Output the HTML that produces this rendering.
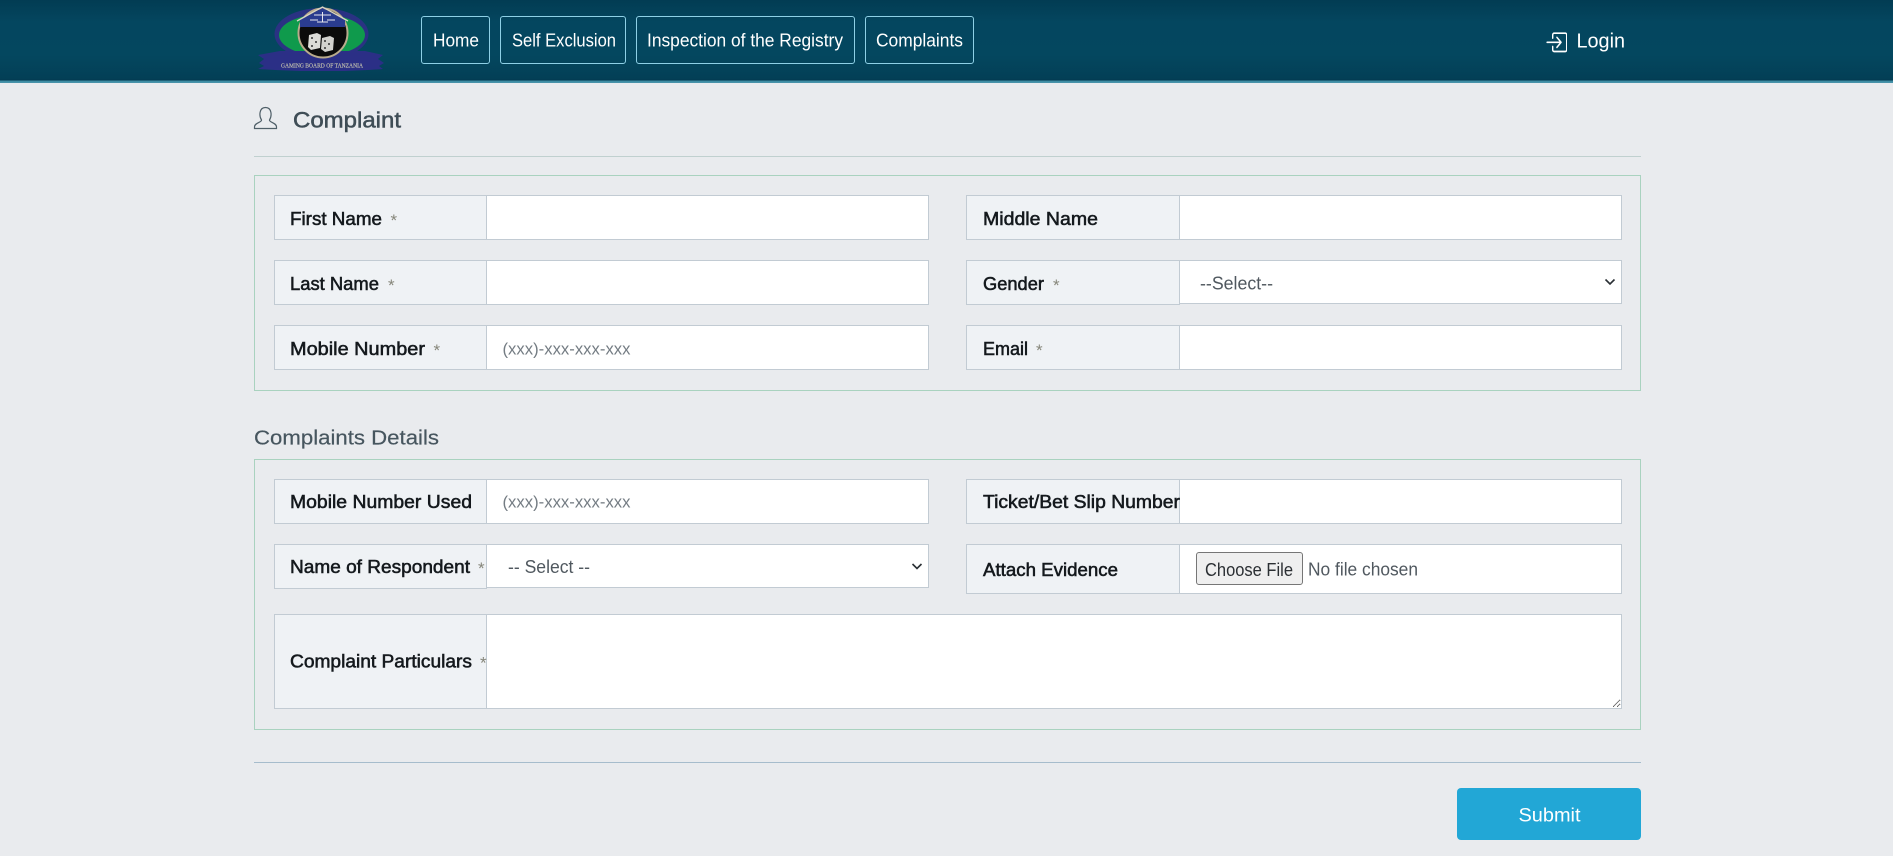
<!DOCTYPE html>
<html lang="en">
<head>
<meta charset="utf-8">
<title>Complaint</title>
<style>
*{box-sizing:border-box}
html,body{margin:0;padding:0;width:1893px;height:856px;overflow:hidden;background:#e9ebee;font-family:"Liberation Sans",Arial,sans-serif}
.a{position:absolute}
#hd{left:0;top:0;width:1893px;height:83px;background:linear-gradient(#023c53 0,#04465f 22px,#04475f 55px,#033f56 79px,#033a50 80px,#3b8aa2 81px,#4b95ab 83px)}
.nav{position:absolute;top:16px;height:48px;border:1px solid #8ed0e6;border-radius:3px}
.hr{position:absolute;left:254px;width:1387px;height:1px}
.box{position:absolute;left:254px;width:1387px;border:1px solid #a9d2bf}
.lab{position:absolute;background:#eff2f5;border:1px solid #c2cbd3}
.inp{position:absolute;background:#fff;border:1px solid #c2cbd3;border-left:none;padding:0;margin:0;border-radius:0;outline:none;display:block}
textarea.inp{resize:both}
#file{left:1196px;top:552px;width:107px;height:33px;background:#efefef;border:1px solid #767676;border-radius:3px}
#sub{left:1457px;top:788px;width:184px;height:52px;background:#22a7d6;border-radius:4px}
svg.t{position:absolute;left:0;top:0;pointer-events:none}
svg text{font-family:"Liberation Sans",Arial,sans-serif}
.l{font-size:18.5px;fill:#14191d;stroke:#14191d;stroke-width:.55px}
.s{font-size:17px;fill:#86867a}
.p{font-size:17px;fill:#747c83}
.o{font-size:18px;fill:#50585f}
.n{font-size:18.5px;fill:#fff}
</style>
</head>
<body>
<div id="hd" class="a"></div>

<div class="nav" style="left:421px;width:69px"></div>
<div class="nav" style="left:500px;width:126px"></div>
<div class="nav" style="left:636px;width:219px"></div>
<div class="nav" style="left:865px;width:109px"></div>

<svg class="a" style="left:250px;top:0" width="150" height="80" viewBox="0 0 150 80">
  <ellipse cx="71.5" cy="34" rx="47" ry="26" fill="#2a3283"/>
  <ellipse cx="72" cy="35" rx="43" ry="20.5" fill="#0f9a4c"/>
  <path d="M8 55L30 51H115L133 55L128 59L134 63L129 66L133 69L118 70L95 71H50L25 70L8 69L14 66L9 63L14 59Z" fill="#2b2f86"/>
  <circle cx="73" cy="33" r="24.5" fill="#0b0b0b" stroke="#b9ab8c" stroke-width="2"/>
  <path d="M50 27V20L72.5 8L95 20V27Z" fill="#2a3c8f"/>
  <path d="M47 21L72.5 7L98 21" fill="none" stroke="#d8d4c4" stroke-width="1.3"/>
  <path d="M72.5 12V22M64 15H81M67 22H78M60 20H68M77 20H85" stroke="#e6e6ee" stroke-width="1" fill="none"/>
  <path d="M59 35L67 33L71 35L70 48L61 50L58 47Z" fill="#dcdcd8"/>
  <path d="M72 38L80 36L84 38L83 50L75 52L71 49Z" fill="#d2d2ce"/>
  <g fill="#333"><circle cx="62" cy="38" r="1"/><circle cx="66" cy="42" r="1"/><circle cx="62" cy="46" r="1"/><circle cx="75" cy="41" r="1"/><circle cx="79" cy="44" r="1"/><circle cx="75" cy="48" r="1"/></g>
  <text x="31" y="67.5" font-size="6.5" textLength="82" lengthAdjust="spacingAndGlyphs" style="font-family:'Liberation Serif',serif" fill="#c4c2ae" stroke="#c4c2ae" stroke-width=".15">GAMING BOARD OF TANZANIA</text>
</svg>

<svg class="a" style="left:1544.6px;top:28.7px" width="22.4" height="26.7" viewBox="0 0 16 16" preserveAspectRatio="none" fill="#fff">
  <path d="M6 3.5a.5.5 0 0 1 .5-.5h8a.5.5 0 0 1 .5.5v9a.5.5 0 0 1-.5.5h-8a.5.5 0 0 1-.5-.5v-2a.5.5 0 0 0-1 0v2A1.5 1.5 0 0 0 6.5 14h8a1.5 1.5 0 0 0 1.5-1.5v-9A1.5 1.5 0 0 0 14.5 2h-8A1.5 1.5 0 0 0 5 3.5v2a.5.5 0 0 0 1 0v-2z"/>
  <path d="M11.854 8.354a.5.5 0 0 0 0-.708l-3-3a.5.5 0 1 0-.708.708L10.293 7.5H1.5a.5.5 0 0 0 0 1h8.793l-2.147 2.146a.5.5 0 0 0 .708.708l3-3z"/>
</svg>

<svg class="a" style="left:0;top:0" width="300" height="140">
  <path d="M261.5 120C259 116 259 107.5 265.5 107.5C272 107.5 272 116 269.5 120C269 122.5 276.5 122.5 276.5 127V128.5H254.5V127C254.5 122.5 262 122.5 261.5 120Z" fill="none" stroke="#4f5f68" stroke-width="1.2"/>
</svg>

<div class="hr" style="top:156px;background:#c0d0cf"></div>

<div class="box" style="top:175px;height:216px"></div>

<div class="lab" style="left:274px;top:195px;width:213px;height:45px"></div>
<input class="inp" style="left:487px;top:195px;width:442px;height:45px">
<div class="lab" style="left:966px;top:195px;width:214px;height:45px"></div>
<input class="inp" style="left:1180px;top:195px;width:442px;height:45px">

<div class="lab" style="left:274px;top:260px;width:213px;height:45px"></div>
<input class="inp" style="left:487px;top:260px;width:442px;height:45px">
<div class="lab" style="left:966px;top:260px;width:214px;height:45px"></div>
<div class="inp" style="left:1180px;top:260px;width:442px;height:44px"></div>

<div class="lab" style="left:274px;top:325px;width:213px;height:45px"></div>
<input class="inp" style="left:487px;top:325px;width:442px;height:45px">
<div class="lab" style="left:966px;top:325px;width:214px;height:45px"></div>
<input class="inp" style="left:1180px;top:325px;width:442px;height:45px">

<div class="box" style="top:459px;height:271px"></div>

<div class="lab" style="left:274px;top:479px;width:213px;height:45px"></div>
<input class="inp" style="left:487px;top:479px;width:442px;height:45px">
<div class="lab" style="left:966px;top:479px;width:214px;height:45px"></div>
<input class="inp" style="left:1180px;top:479px;width:442px;height:45px">

<div class="lab" style="left:274px;top:544px;width:213px;height:45px"></div>
<div class="inp" style="left:487px;top:544px;width:442px;height:44px"></div>
<div class="lab" style="left:966px;top:544px;width:214px;height:50px"></div>
<div class="inp" style="left:1180px;top:544px;width:442px;height:50px"></div>
<div id="file" class="a"></div>

<div class="lab" style="left:274px;top:614px;width:213px;height:95px"></div>
<textarea class="inp" style="left:487px;top:614px;width:1135px;height:95px"></textarea>

<div class="hr" style="top:762px;background:#a6bccc"></div>
<div id="sub" class="a"></div>

<svg class="t" width="1893" height="856" viewBox="0 0 1893 856">
  <text class="n" x="433" y="46.5" textLength="46" lengthAdjust="spacingAndGlyphs">Home</text>
  <text class="n" x="512" y="46.5" textLength="104" lengthAdjust="spacingAndGlyphs">Self Exclusion</text>
  <text class="n" x="647" y="46.5" textLength="196" lengthAdjust="spacingAndGlyphs">Inspection of the Registry</text>
  <text class="n" x="876" y="46.5" textLength="87" lengthAdjust="spacingAndGlyphs">Complaints</text>
  <text x="1576.5" y="47.5" font-size="20" fill="#fff" textLength="48.5" lengthAdjust="spacingAndGlyphs">Login</text>

  <text x="293" y="127.5" font-size="22" fill="#3f4d56" stroke="#3f4d56" stroke-width=".5" textLength="108" lengthAdjust="spacingAndGlyphs">Complaint</text>
  <text x="254" y="444.5" font-size="20.5" fill="#47565f" stroke="#47565f" stroke-width=".2" textLength="185" lengthAdjust="spacingAndGlyphs">Complaints Details</text>

  <text class="l" x="290" y="225" textLength="92" lengthAdjust="spacingAndGlyphs">First Name</text>
  <text class="s" x="390.5" y="226">*</text>
  <text class="l" x="290" y="290" textLength="89" lengthAdjust="spacingAndGlyphs">Last Name</text>
  <text class="s" x="388" y="291">*</text>
  <text class="l" x="290" y="355" textLength="135" lengthAdjust="spacingAndGlyphs">Mobile Number</text>
  <text class="s" x="433.5" y="356">*</text>
  <text class="p" x="502.5" y="354.5" textLength="128" lengthAdjust="spacingAndGlyphs">(xxx)-xxx-xxx-xxx</text>

  <text class="l" x="983" y="225" textLength="115" lengthAdjust="spacingAndGlyphs">Middle Name</text>
  <text class="l" x="983" y="290" textLength="61" lengthAdjust="spacingAndGlyphs">Gender</text>
  <text class="s" x="1053" y="291">*</text>
  <text class="o" x="1200" y="289.5" textLength="73" lengthAdjust="spacingAndGlyphs">--Select--</text>
  <path d="M1605.5 279.5L1610 284L1614.5 279.5" fill="none" stroke="#2a2f34" stroke-width="1.6"/>
  <text class="l" x="983" y="355" textLength="45" lengthAdjust="spacingAndGlyphs">Email</text>
  <text class="s" x="1036" y="356">*</text>

  <text class="l" x="290" y="508" textLength="182" lengthAdjust="spacingAndGlyphs">Mobile Number Used</text>
  <text class="p" x="502.5" y="507.7" textLength="128" lengthAdjust="spacingAndGlyphs">(xxx)-xxx-xxx-xxx</text>
  <text class="l" x="983" y="508" textLength="197" lengthAdjust="spacingAndGlyphs">Ticket/Bet Slip Number</text>

  <text class="l" x="290" y="573" textLength="180" lengthAdjust="spacingAndGlyphs">Name of Respondent</text>
  <text class="s" x="478" y="574">*</text>
  <text class="o" x="508" y="573" textLength="82" lengthAdjust="spacingAndGlyphs">-- Select --</text>
  <path d="M912.5 564L917 568.5L921.5 564" fill="none" stroke="#2a2f34" stroke-width="1.6"/>

  <text class="l" x="983" y="576" textLength="135" lengthAdjust="spacingAndGlyphs">Attach Evidence</text>
  <text x="1205" y="576" font-size="18" fill="#2b2f33" textLength="88" lengthAdjust="spacingAndGlyphs">Choose File</text>
  <text class="o" x="1308" y="575.5" textLength="110" lengthAdjust="spacingAndGlyphs">No file chosen</text>

  <text class="l" x="290" y="667.5" textLength="182" lengthAdjust="spacingAndGlyphs">Complaint Particulars</text>
  <text class="s" x="480" y="668.5">*</text>

  <text x="1518.5" y="821.5" font-size="19" fill="#fff" textLength="62" lengthAdjust="spacingAndGlyphs">Submit</text>
</svg>
</body>
</html>
